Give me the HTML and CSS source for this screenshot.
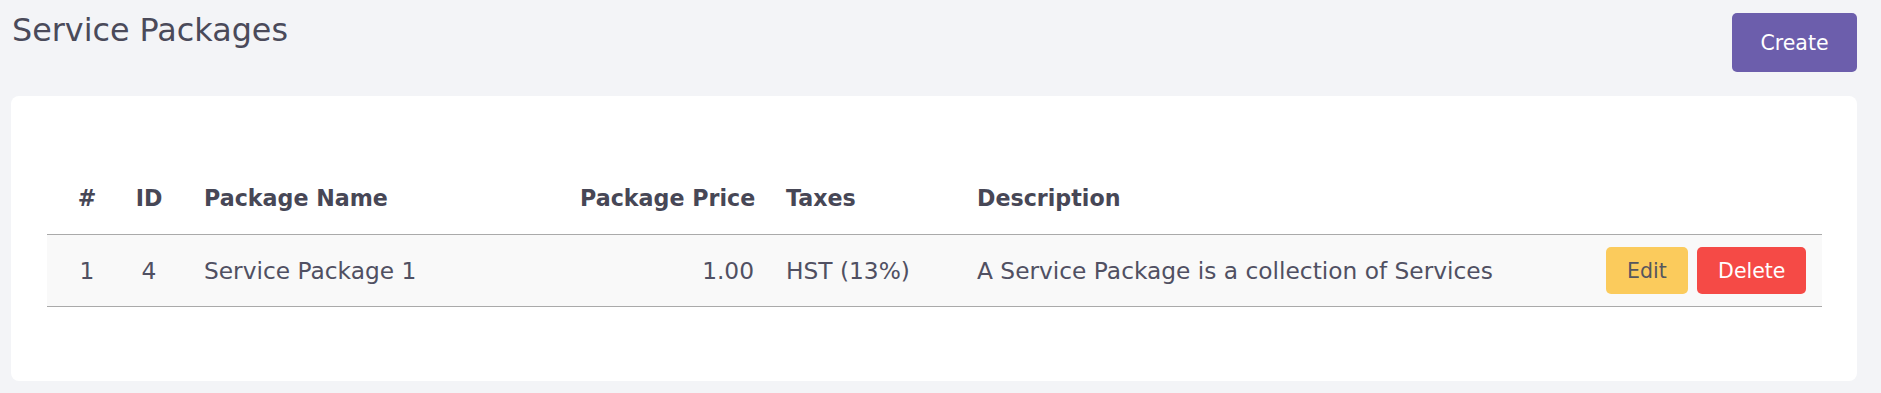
FILE: index.html
```html
<!DOCTYPE html>
<html lang="en">
<head>
  <meta charset="UTF-8">
  <title>Service Packages</title>
  <link rel="stylesheet" href="styles.css">
</head>
<body>

  <header class="page-head">
    <h1>Service Packages</h1>
    <button class="btn btn-create">Create</button>
  </header>

  <div class="card">
    <table class="packages">
      <colgroup>
        <col class="c-num">
        <col class="c-id">
        <col class="c-name">
        <col class="c-price">
        <col class="c-tax">
        <col class="c-desc">
        <col class="c-actions">
      </colgroup>
      <thead>
        <tr>
          <th class="center">#</th>
          <th class="center">ID</th>
          <th class="name">Package Name</th>
          <th class="right">Package Price</th>
          <th>Taxes</th>
          <th>Description</th>
          <th></th>
        </tr>
      </thead>
      <tbody>
        <tr>
          <td class="center">1</td>
          <td class="center">4</td>
          <td class="name">Service Package 1</td>
          <td class="right">1.00</td>
          <td>HST (13%)</td>
          <td>A Service Package is a collection of Services</td>
          <td class="right">
            <button class="btn btn-edit">Edit</button>
            <button class="btn btn-delete">Delete</button>
          </td>
        </tr>
      </tbody>
    </table>
  </div>

</body>
</html>
```

FILE: styles.css
```css
body {
  margin: 0;
  padding: 0 24px 0 11px;
  background-color: #f3f4f7;
  color: #4a4a5a;
  font-family: "DejaVu Sans", sans-serif;
}

.page-head {
  display: flex;
  justify-content: space-between;
  align-items: flex-start;
  padding-top: 11px;
}

h1 {
  margin: 0 0 0 1px;
  font-size: 31.8px;
  font-weight: normal;
  color: #4a4a5a;
}

.btn {
  font-family: "DejaVu Sans", sans-serif;
  font-size: 20.5px;
  border: none;
  border-radius: 5px;
  cursor: pointer;
}

.btn-create {
  margin-top: 2px;
  width: 125px;
  height: 59px;
  background-color: #6c5eac;
  color: #fff;
}

.card {
  margin-top: 24px;
  background-color: #fff;
  border-radius: 8px;
  padding: 66px 35px 74px 36px;
}

.packages {
  width: 100%;
  border-collapse: collapse;
  table-layout: fixed;
  font-size: 23.3px;
}

.c-num { width: 80px; }
.c-id { width: 44px; }
.c-name { width: 393px; }
.c-price { width: 206px; }
.c-tax { width: 191px; }
.c-actions { width: 232px; }

.packages th,
.packages td {
  height: 71px;
  padding: 0 16px;
  text-align: left;
  white-space: nowrap;
  border-bottom: 1px solid #aaaaaa;
}

.packages th {
  height: 72px;
  font-size: 22.2px;
  font-weight: bold;
  color: #474756;
}

.packages td {
  color: #505062;
  background-color: #f9f9f9;
}

.packages .center {
  padding: 0;
  text-align: center;
}

.packages .name {
  padding-left: 33px;
}

.packages .right {
  text-align: right;
}

.btn-edit,
.btn-delete {
  height: 47px;
  padding: 0 21px;
  vertical-align: middle;
}

.btn-edit {
  background-color: #fbcb5c;
  color: #56565e;
}

.btn-delete {
  margin-left: 2px;
  background-color: #f54a46;
  color: #fff;
}
```
